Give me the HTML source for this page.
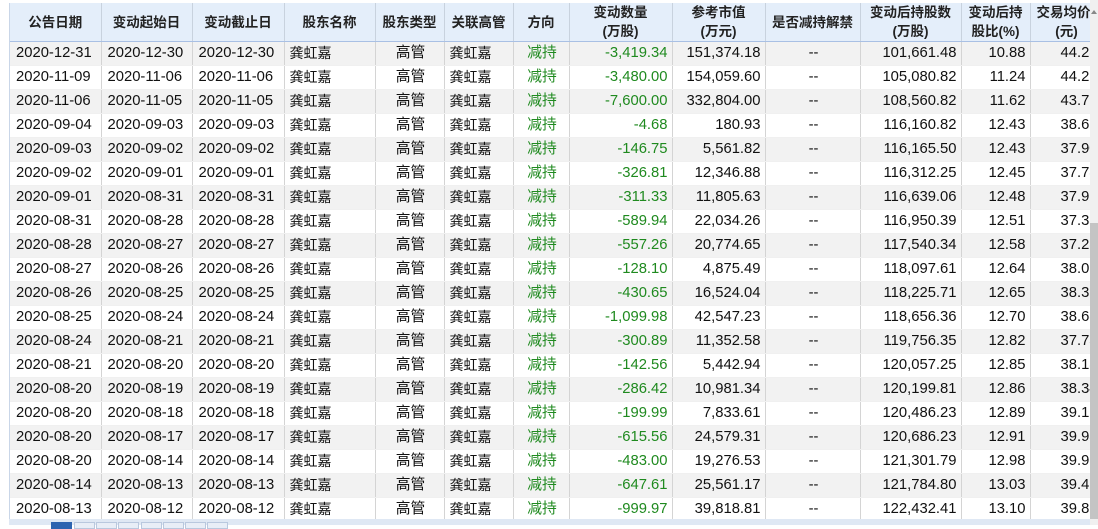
<!DOCTYPE html>
<html><head><meta charset="utf-8"><style>
body{margin:0;width:1098px;height:525px;overflow:hidden;background:#fff;font-family:"Liberation Sans","Noto Sans CJK SC",sans-serif;position:relative}
.wrap{position:absolute;left:9px;top:3px;width:1081px;height:516px;overflow:hidden;border-left:1px solid #c9d6e8}
table{border-collapse:collapse;table-layout:fixed;width:1100px}
th{background:#e4eefa;font-size:13.5px;font-weight:bold;color:#222;height:38px;border-right:1px solid #c8d2de;border-bottom:1px solid #a9c0e4;padding:0 2px;line-height:19px;white-space:nowrap;overflow:hidden}
td{height:23px;border-right:1px solid #d4d4d4;border-bottom:1px solid #f0f0f0;font-size:14.8px;color:#111;padding:0 4px 0 6px;white-space:nowrap;overflow:hidden;line-height:23px}
td.r{padding:0 4px 0 2px}
tr:nth-child(even) td{background:#f2f2f2}
.r{text-align:right}.c{text-align:center}.g{color:#1f8a1f}
td:nth-child(4),td:nth-child(6){font-size:14px;padding-left:5px}
td:nth-child(13){padding-left:30px}
.bar{position:absolute;left:9px;top:519px;width:1081px;height:6px;background:#dfe8f4}
.pg{position:absolute;top:522px;width:19px;height:5px;border:1px solid #b9c8de;background:#e8eef7}
.sb{position:absolute;left:1090px;top:0;width:8px;height:525px;background:#f0f0f0}
.th{position:absolute;left:1090px;top:223px;width:8px;height:296px;background:#c4c4c4}
</style></head><body>
<div class="wrap"><table>
<colgroup><col style="width:91px"><col style="width:91px"><col style="width:92px"><col style="width:91px"><col style="width:69px"><col style="width:69px"><col style="width:56px"><col style="width:103px"><col style="width:93px"><col style="width:95px"><col style="width:101px"><col style="width:69px"><col style="width:80px"></colgroup>
<tr><th>公告日期</th><th>变动起始日</th><th>变动截止日</th><th>股东名称</th><th>股东类型</th><th>关联高管</th><th>方向</th><th>变动数量<br>(万股)</th><th>参考市值<br>(万元)</th><th>是否减持解禁</th><th>变动后持股数<br>(万股)</th><th>变动后持<br>股比(%)</th><th style="text-align:left;padding-left:6px">交易均价<br>&nbsp;&nbsp;&nbsp;&nbsp;&nbsp;(元)</th></tr>
<tr><td>2020-12-31</td><td>2020-12-30</td><td>2020-12-30</td><td>龚虹嘉</td><td class="c">高管</td><td>龚虹嘉</td><td class="c g">减持</td><td class="r g">-3,419.34</td><td class="r">151,374.18</td><td class="c">--</td><td class="r">101,661.48</td><td class="r">10.88</td><td>44.28</td></tr>
<tr><td>2020-11-09</td><td>2020-11-06</td><td>2020-11-06</td><td>龚虹嘉</td><td class="c">高管</td><td>龚虹嘉</td><td class="c g">减持</td><td class="r g">-3,480.00</td><td class="r">154,059.60</td><td class="c">--</td><td class="r">105,080.82</td><td class="r">11.24</td><td>44.27</td></tr>
<tr><td>2020-11-06</td><td>2020-11-05</td><td>2020-11-05</td><td>龚虹嘉</td><td class="c">高管</td><td>龚虹嘉</td><td class="c g">减持</td><td class="r g">-7,600.00</td><td class="r">332,804.00</td><td class="c">--</td><td class="r">108,560.82</td><td class="r">11.62</td><td>43.79</td></tr>
<tr><td>2020-09-04</td><td>2020-09-03</td><td>2020-09-03</td><td>龚虹嘉</td><td class="c">高管</td><td>龚虹嘉</td><td class="c g">减持</td><td class="r g">-4.68</td><td class="r">180.93</td><td class="c">--</td><td class="r">116,160.82</td><td class="r">12.43</td><td>38.66</td></tr>
<tr><td>2020-09-03</td><td>2020-09-02</td><td>2020-09-02</td><td>龚虹嘉</td><td class="c">高管</td><td>龚虹嘉</td><td class="c g">减持</td><td class="r g">-146.75</td><td class="r">5,561.82</td><td class="c">--</td><td class="r">116,165.50</td><td class="r">12.43</td><td>37.90</td></tr>
<tr><td>2020-09-02</td><td>2020-09-01</td><td>2020-09-01</td><td>龚虹嘉</td><td class="c">高管</td><td>龚虹嘉</td><td class="c g">减持</td><td class="r g">-326.81</td><td class="r">12,346.88</td><td class="c">--</td><td class="r">116,312.25</td><td class="r">12.45</td><td>37.78</td></tr>
<tr><td>2020-09-01</td><td>2020-08-31</td><td>2020-08-31</td><td>龚虹嘉</td><td class="c">高管</td><td>龚虹嘉</td><td class="c g">减持</td><td class="r g">-311.33</td><td class="r">11,805.63</td><td class="c">--</td><td class="r">116,639.06</td><td class="r">12.48</td><td>37.92</td></tr>
<tr><td>2020-08-31</td><td>2020-08-28</td><td>2020-08-28</td><td>龚虹嘉</td><td class="c">高管</td><td>龚虹嘉</td><td class="c g">减持</td><td class="r g">-589.94</td><td class="r">22,034.26</td><td class="c">--</td><td class="r">116,950.39</td><td class="r">12.51</td><td>37.35</td></tr>
<tr><td>2020-08-28</td><td>2020-08-27</td><td>2020-08-27</td><td>龚虹嘉</td><td class="c">高管</td><td>龚虹嘉</td><td class="c g">减持</td><td class="r g">-557.26</td><td class="r">20,774.65</td><td class="c">--</td><td class="r">117,540.34</td><td class="r">12.58</td><td>37.28</td></tr>
<tr><td>2020-08-27</td><td>2020-08-26</td><td>2020-08-26</td><td>龚虹嘉</td><td class="c">高管</td><td>龚虹嘉</td><td class="c g">减持</td><td class="r g">-128.10</td><td class="r">4,875.49</td><td class="c">--</td><td class="r">118,097.61</td><td class="r">12.64</td><td>38.06</td></tr>
<tr><td>2020-08-26</td><td>2020-08-25</td><td>2020-08-25</td><td>龚虹嘉</td><td class="c">高管</td><td>龚虹嘉</td><td class="c g">减持</td><td class="r g">-430.65</td><td class="r">16,524.04</td><td class="c">--</td><td class="r">118,225.71</td><td class="r">12.65</td><td>38.37</td></tr>
<tr><td>2020-08-25</td><td>2020-08-24</td><td>2020-08-24</td><td>龚虹嘉</td><td class="c">高管</td><td>龚虹嘉</td><td class="c g">减持</td><td class="r g">-1,099.98</td><td class="r">42,547.23</td><td class="c">--</td><td class="r">118,656.36</td><td class="r">12.70</td><td>38.68</td></tr>
<tr><td>2020-08-24</td><td>2020-08-21</td><td>2020-08-21</td><td>龚虹嘉</td><td class="c">高管</td><td>龚虹嘉</td><td class="c g">减持</td><td class="r g">-300.89</td><td class="r">11,352.58</td><td class="c">--</td><td class="r">119,756.35</td><td class="r">12.82</td><td>37.73</td></tr>
<tr><td>2020-08-21</td><td>2020-08-20</td><td>2020-08-20</td><td>龚虹嘉</td><td class="c">高管</td><td>龚虹嘉</td><td class="c g">减持</td><td class="r g">-142.56</td><td class="r">5,442.94</td><td class="c">--</td><td class="r">120,057.25</td><td class="r">12.85</td><td>38.18</td></tr>
<tr><td>2020-08-20</td><td>2020-08-19</td><td>2020-08-19</td><td>龚虹嘉</td><td class="c">高管</td><td>龚虹嘉</td><td class="c g">减持</td><td class="r g">-286.42</td><td class="r">10,981.34</td><td class="c">--</td><td class="r">120,199.81</td><td class="r">12.86</td><td>38.34</td></tr>
<tr><td>2020-08-20</td><td>2020-08-18</td><td>2020-08-18</td><td>龚虹嘉</td><td class="c">高管</td><td>龚虹嘉</td><td class="c g">减持</td><td class="r g">-199.99</td><td class="r">7,833.61</td><td class="c">--</td><td class="r">120,486.23</td><td class="r">12.89</td><td>39.17</td></tr>
<tr><td>2020-08-20</td><td>2020-08-17</td><td>2020-08-17</td><td>龚虹嘉</td><td class="c">高管</td><td>龚虹嘉</td><td class="c g">减持</td><td class="r g">-615.56</td><td class="r">24,579.31</td><td class="c">--</td><td class="r">120,686.23</td><td class="r">12.91</td><td>39.93</td></tr>
<tr><td>2020-08-20</td><td>2020-08-14</td><td>2020-08-14</td><td>龚虹嘉</td><td class="c">高管</td><td>龚虹嘉</td><td class="c g">减持</td><td class="r g">-483.00</td><td class="r">19,276.53</td><td class="c">--</td><td class="r">121,301.79</td><td class="r">12.98</td><td>39.91</td></tr>
<tr><td>2020-08-14</td><td>2020-08-13</td><td>2020-08-13</td><td>龚虹嘉</td><td class="c">高管</td><td>龚虹嘉</td><td class="c g">减持</td><td class="r g">-647.61</td><td class="r">25,561.17</td><td class="c">--</td><td class="r">121,784.80</td><td class="r">13.03</td><td>39.47</td></tr>
<tr><td>2020-08-13</td><td>2020-08-12</td><td>2020-08-12</td><td>龚虹嘉</td><td class="c">高管</td><td>龚虹嘉</td><td class="c g">减持</td><td class="r g">-999.97</td><td class="r">39,818.81</td><td class="c">--</td><td class="r">122,432.41</td><td class="r">13.10</td><td>39.82</td></tr>
</table></div>
<div class="bar"></div>
<div class="pg" style="left:51px;background:#2d64b0;border-color:#2d64b0"></div>
<div class="pg" style="left:74px"></div><div class="pg" style="left:96px"></div><div class="pg" style="left:118px"></div><div class="pg" style="left:141px"></div><div class="pg" style="left:163px"></div><div class="pg" style="left:185px"></div><div class="pg" style="left:207px"></div>
<div class="sb"></div><div class="th"></div>
<div style="position:absolute;left:1091px;top:10px;width:0;height:0;border-left:3px solid transparent;border-right:3px solid transparent;border-bottom:4px solid #888"></div>
</body></html>
